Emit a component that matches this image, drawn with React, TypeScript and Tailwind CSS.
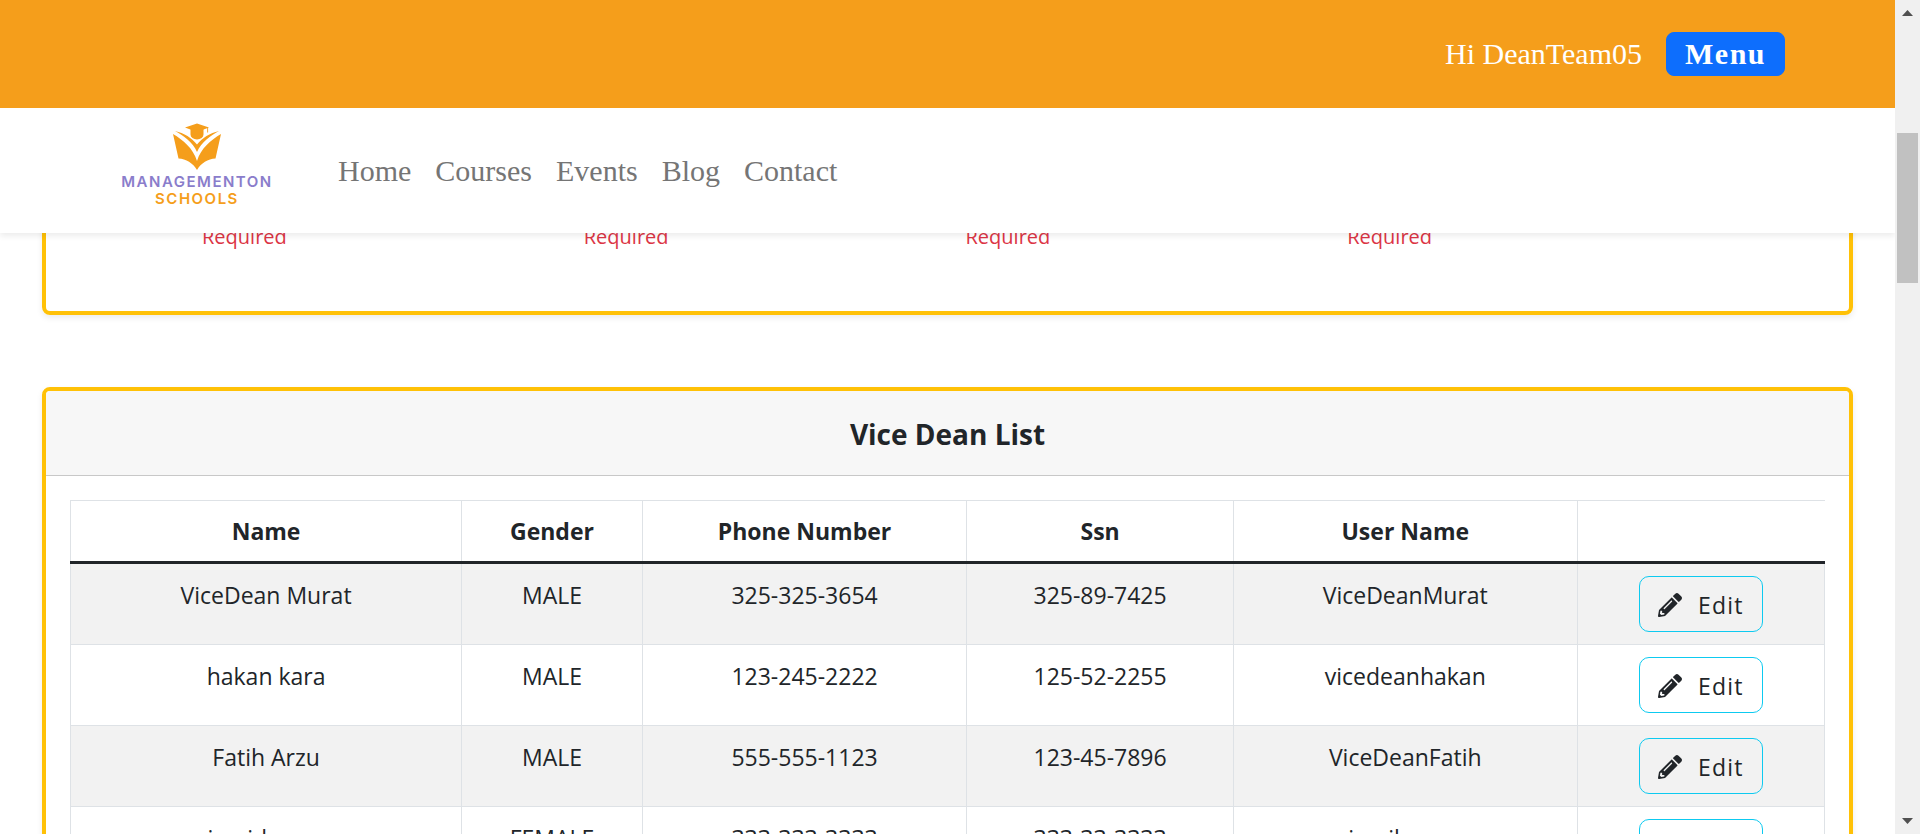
import { FaPencilAlt } from "react-icons/fa";

const links = ["Home", "Courses", "Events", "Blog", "Contact"];
const fields = ["Name", "Surname", "Birth place", "Gender"];
const columns = ["Name", "Gender", "Phone Number", "Ssn", "User Name"];
const rows = [
  ["ViceDean Murat", "MALE", "325-325-3654", "325-89-7425", "ViceDeanMurat"],
  ["hakan kara", "MALE", "123-245-2222", "125-52-2255", "vicedeanhakan"],
  ["Fatih Arzu", "MALE", "555-555-1123", "123-45-7896", "ViceDeanFatih"],
  ["jamid ozan", "FEMALE", "333-333-3333", "333-33-3333", "jamilozcan"],
];

function Logo() {
  return (
    <a href="#" className="flex w-[154px] flex-col items-center pb-[11px] font-['Inter',sans-serif] text-[15px] font-semibold leading-[17px] tracking-widest">
      <svg viewBox="0 0 50 48" className="h-12 w-[50px]" fill="#f59e1b" aria-hidden="true">
        <path d="M25 0.500 37 4.500 25 9 13 4.500Z" />
        <path d="M18.500 5V11.500a6.500 5 0 0 0 13 0V5L25 7Z" />
        <path d="M35.200 4.500h.9v5h-.9Z" />
        <path d="M3 8C12 10 20 15 25 21.500 30 15 38 10 47 8 39 12.500 29 19 25 29 21 19 11 12.500 3 8Z" />
        <path d="M1 11C11 17 21 25 25 38 29 25 39 17 49 11L43.500 35.500C36 36 29 40 25 47 21 40 14 36 6.500 35.500Z" />
      </svg>
      <span className="mt-0.5 text-[#8a7dcb]">MANAGEMENTON</span>
      <span className="text-[#f59e1b]">SCHOOLS</span>
    </a>
  );
}

function Scrollbar() {
  return (
    <div className="flex w-[25px] shrink-0 flex-col items-center bg-[#f0f0f0] py-[10px]">
      <svg viewBox="0 0 11 6" className="h-[6px] w-[11px]" fill="#505050" aria-hidden="true">
        <path d="M0 6 5.500 0 11 6Z" />
      </svg>
      <div className="mt-[117px] h-[150px] w-[21px] bg-[#c1c1c1]" />
      <svg viewBox="0 0 11 6" className="mt-auto h-[6px] w-[11px]" fill="#505050" aria-hidden="true">
        <path d="M0 0 5.500 6 11 0Z" />
      </svg>
    </div>
  );
}

export default function App() {
  return (
    <div className="flex h-screen overflow-hidden bg-white font-['Open_Sans','Noto_Sans',sans-serif] text-[#212529]">
      <div className="flex min-w-0 flex-1 flex-col overflow-hidden">
        <header className="relative z-10 shrink-0 bg-white font-['Liberation_Serif',serif] text-3xl shadow-[0_3px_6px_rgba(0,0,0,0.08)]">
          <div className="flex h-[108px] items-center justify-end gap-6 bg-[#f59e1b] pr-[110px] text-white">
            <span>Hi DeanTeam05</span>
            <button type="button" className="flex h-11 items-center rounded-lg border border-[#0d6efd] bg-[#0d6efd] px-[18px] font-bold tracking-wider">
              Menu
            </button>
          </div>
          <nav className="flex h-[125px] items-center gap-16 pl-[120px]">
            <Logo />
            <ul className="flex gap-6 text-[#757575]">
              {links.map((l) => (
                <li key={l}>
                  <a href="#">{l}</a>
                </li>
              ))}
            </ul>
          </nav>
        </header>

        <main className="-mt-9 flex flex-col gap-[72px] px-[42px]">
          <section className="rounded-lg border-4 border-[#ffc107] px-[138px] pb-[59px] pt-[21px] shadow-[0_3px_6px_rgba(0,0,0,0.08)]">
            <div className="grid grid-cols-4">
              {fields.map((f) => (
                <p key={f} className="px-[18px] text-xl leading-[30px] text-[#dc3545]">
                  Required
                </p>
              ))}
            </div>
          </section>

          <section className="rounded-lg border-4 border-[#ffc107] shadow-[0_3px_6px_rgba(0,0,0,0.08)]">
            <h2 className="flex h-[85px] items-center justify-center rounded-t border-b border-[#c8c8c8] bg-[#f7f7f7] pt-0.5 text-[28px] font-bold">
              Vice Dean List
            </h2>
            <div className="p-6">
              <table className="w-full table-fixed border-collapse text-center text-[23px] leading-9">
                <colgroup>
                  <col className="w-[22.3%]" />
                  <col className="w-[10.3%]" />
                  <col className="w-[18.5%]" />
                  <col className="w-[15.2%]" />
                  <col className="w-[19.6%]" />
                  <col />
                </colgroup>
                <thead>
                  <tr className="h-[62px] border-b-3 border-b-[#212529]">
                    {columns.map((c) => (
                      <th key={c} className="border-x border-t border-[#dee2e6] p-3 font-bold">
                        {c}
                      </th>
                    ))}
                    <th aria-label="Actions" className="border-t border-[#dee2e6]" />
                  </tr>
                </thead>
                <tbody>
                  {rows.map((r) => (
                    <tr key={r[0]} className="odd:bg-[#f2f2f2]">
                      {r.map((v, i) => (
                        <td key={columns[i]} className="border border-[#dee2e6] px-3 pb-[11px] pt-[13px] align-top">
                          {v}
                        </td>
                      ))}
                      <td className="border border-[#dee2e6] p-3">
                        <button type="button" className="mx-auto flex h-14 items-center gap-4 rounded-[10px] border border-[#0dcaf0] px-[18px] pt-0.5 tracking-wider">
                          <FaPencilAlt className="size-6" aria-hidden="true" />
                          Edit
                        </button>
                      </td>
                    </tr>
                  ))}
                </tbody>
              </table>
            </div>
          </section>
        </main>
      </div>
      <Scrollbar />
    </div>
  );
}
